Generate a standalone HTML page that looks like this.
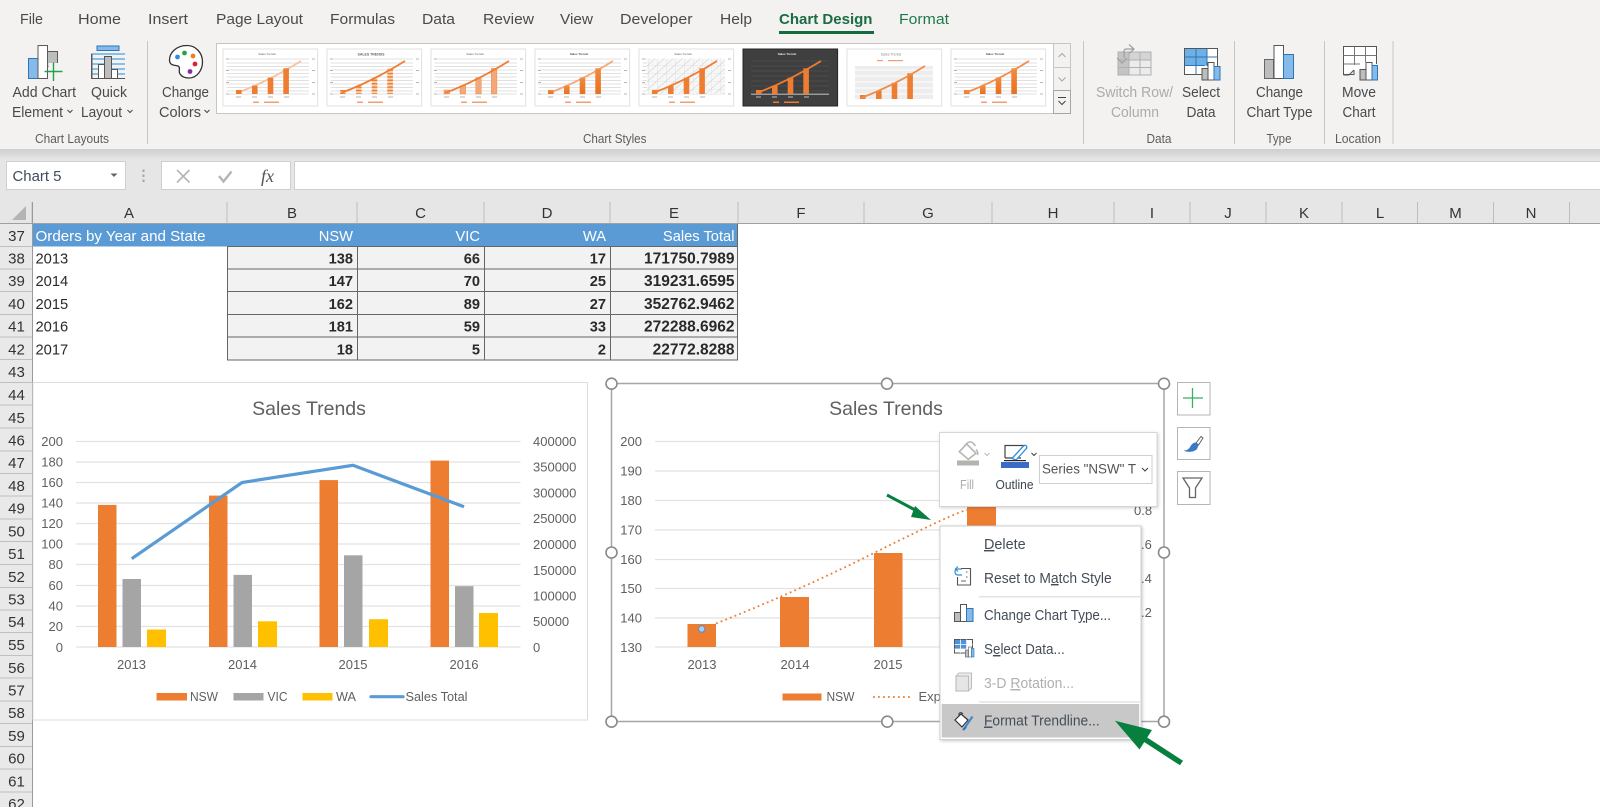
<!DOCTYPE html>
<html><head><meta charset="utf-8"><title>Chart Design</title>
<style>
html,body{margin:0;padding:0;background:#fff;width:1600px;height:807px;overflow:hidden}
svg{display:block;filter:blur(.3px)}
text{font-family:"Liberation Sans",sans-serif}
.rb{font-size:14.5px;fill:#4a4a4a}
.gl{font-size:13px;fill:#5c5c5c}
.dis{fill:#ababab}
.tab{font-size:15px;fill:#4a4a4a}
.col{font-size:15px;fill:#333;text-anchor:middle}
.row{font-size:15px;fill:#333;text-anchor:middle}
.yr{font-size:14.7px;fill:#2a2a2a}
.hd{font-size:14.7px;fill:#fff}
.num{font-size:14.6px;font-weight:bold;fill:#2a2a2a;text-anchor:end}
.ax{font-size:13px;fill:#606060}
.end{text-anchor:end}
.mid{text-anchor:middle}
.ttl{font-size:19.5px;fill:#606060;text-anchor:middle}
.mn{font-size:14.3px;fill:#444d57}
.tt{font-size:3px;fill:#666;text-anchor:middle}
</style></head><body>
<svg width="1600" height="807" viewBox="0 0 1600 807" xmlns="http://www.w3.org/2000/svg">
<defs>
<linearGradient id="sh" x1="0" y1="0" x2="0" y2="1"><stop offset="0" stop-color="#cfcfcf"/><stop offset="1" stop-color="#e6e6e6"/></linearGradient>
<linearGradient id="bo" x1="0" y1="0" x2="0" y2="1"><stop offset="0" stop-color="#f28a3c"/><stop offset="1" stop-color="#e8701f"/></linearGradient>
<pattern id="hat" width="9" height="8" patternUnits="userSpaceOnUse"><rect width="9" height="8" fill="#f7f7f7"/><path d="M0 8L9 0M0 0V8M0 0H9" stroke="#d2d2d2" stroke-width=".6"/></pattern>
<pattern id="str" width="3" height="3.4" patternUnits="userSpaceOnUse"><rect width="3" height="3.4" fill="#fbd3b5"/><rect width="3" height="1.5" fill="#ee7d31"/></pattern>
<g id="grid" stroke="#e0e0e0" stroke-width="1"><path d="M3.5 10H86M3.5 14H86M3.5 17.500H86M3.5 21H86M3.500 24.500H86M3.500 28H86M3.500 31.500H86M3.500 35H86M3.500 38.500H86M3.500 42H86M3.500 45H86"/></g>
<g id="lab" fill="#b5b5b5"><rect x="3" y="9.500" width="3" height="1"/><rect x="3" y="21" width="3" height="1"/><rect x="3" y="33" width="3" height="1"/><rect x="3" y="44.500" width="3" height="1"/><rect x="89" y="9.500" width="3" height="1"/><rect x="89" y="21" width="3" height="1"/><rect x="89" y="33" width="3" height="1"/><rect x="89" y="44.500" width="3" height="1"/><rect x="13" y="47.500" width="5" height="1"/><rect x="29" y="47.500" width="5" height="1"/><rect x="45" y="47.500" width="5" height="1"/><rect x="61" y="47.500" width="5" height="1"/><rect x="30" y="52.500" width="6" height="1.500" fill="#f0a070"/><rect x="41" y="52.500" width="15" height="1.500" fill="#f0a070"/></g>
<g id="bars"><rect x="13" y="41" width="5.600" height="4"/><rect x="29" y="36.700" width="5.600" height="8.300"/><rect x="44.700" y="28.700" width="5.600" height="16.300"/><rect x="60.300" y="19.300" width="5.600" height="25.700"/></g>
<path id="trl" d="M14 44Q46 32 78 12" fill="none" stroke-width="1.800"/>
<g id="tb"><rect width="94.600" height="57" fill="#fff" stroke="#e2e2e2" stroke-width="1"/><use href="#grid"/><use href="#lab"/></g>
</defs>

<!-- ribbon -->
<rect width="1600" height="149" fill="#f3f2f1"/>
<rect y="149" width="1600" height="11" fill="url(#sh)"/>
<rect y="160" width="1600" height="64" fill="#e6e6e6"/>

<text class="tab" x="20" y="24" textLength="23" lengthAdjust="spacingAndGlyphs">File</text>
<text class="tab" x="78" y="24" textLength="43" lengthAdjust="spacingAndGlyphs">Home</text>
<text class="tab" x="148" y="24" textLength="40" lengthAdjust="spacingAndGlyphs">Insert</text>
<text class="tab" x="216" y="24" textLength="87" lengthAdjust="spacingAndGlyphs">Page Layout</text>
<text class="tab" x="330" y="24" textLength="65" lengthAdjust="spacingAndGlyphs">Formulas</text>
<text class="tab" x="422" y="24" textLength="33" lengthAdjust="spacingAndGlyphs">Data</text>
<text class="tab" x="483" y="24" textLength="51" lengthAdjust="spacingAndGlyphs">Review</text>
<text class="tab" x="560" y="24" textLength="33" lengthAdjust="spacingAndGlyphs">View</text>
<text class="tab" x="620" y="24" textLength="72.500" lengthAdjust="spacingAndGlyphs">Developer</text>
<text class="tab" x="720" y="24" textLength="32" lengthAdjust="spacingAndGlyphs">Help</text>
<text class="tab" x="779" y="24" textLength="93.500" lengthAdjust="spacingAndGlyphs" style="fill:#1a6e41;font-weight:bold">Chart Design</text>
<rect x="779" y="31" width="95" height="3" fill="#146c3c"/>
<text class="tab" x="899" y="24" textLength="50" lengthAdjust="spacingAndGlyphs" style="fill:#1f7a4a">Format</text>

<!-- add chart element -->
<rect x="28.500" y="58.500" width="9.500" height="20" fill="#85bbeb" stroke="#2f75b5"/>
<rect x="47" y="51.500" width="10.500" height="15" fill="#bdbdbd" stroke="#5a5a5a"/>
<rect x="38" y="45.500" width="9.500" height="33" fill="#fff" stroke="#5a5a5a"/>
<rect x="48.500" y="63" width="13" height="17" fill="#f3f2f1"/>
<path d="M53.500 62.500V81M44.500 71.500H62.500" stroke="#22a04a" stroke-width="1.400" fill="none"/>
<text class="rb" x="12.500" y="97" textLength="63.500" lengthAdjust="spacingAndGlyphs">Add Chart</text>
<text class="rb" x="12" y="117" textLength="51" lengthAdjust="spacingAndGlyphs">Element</text>
<path d="M67.500 110l2.500 2.500 2.500-2.500" fill="none" stroke="#444"/>

<!-- quick layout -->
<rect x="97" y="46" width="22" height="4.500" fill="#85bbeb" stroke="#2f75b5"/>
<path d="M91 54H125M91 59H125M91 64H125M91 69H125M91 74H125" stroke="#4aa3df" stroke-width="1.200"/>
<rect x="91" y="54" width="1.500" height="25" fill="#595959"/>
<rect x="98.500" y="64.500" width="6" height="14" fill="#fff" stroke="#555"/>
<rect x="104.500" y="56.500" width="7" height="22" fill="#bdbdbd" stroke="#555"/>
<rect x="111.500" y="69.500" width="6" height="9" fill="#fff" stroke="#555"/>
<path d="M91 78.500H125" stroke="#555"/>
<text class="rb" x="91" y="97" textLength="36" lengthAdjust="spacingAndGlyphs">Quick</text>
<text class="rb" x="81" y="117" textLength="41" lengthAdjust="spacingAndGlyphs">Layout</text>
<path d="M127.500 110l2.500 2.500 2.500-2.500" fill="none" stroke="#444"/>
<text class="gl" x="35" y="143" textLength="74" lengthAdjust="spacingAndGlyphs">Chart Layouts</text>
<path d="M147.500 41V144M1083.500 41V144M1234.500 41V144M1324.500 41V144M1393 41V144" stroke="#c8c6c4"/>

<!-- palette -->
<path d="M187 45.500C176 45.500 169.500 53 169.500 60C169.500 66 175 65 178 66C181 67 178 71 180 74C182 77 186 78 189 78C197 78 202.500 70 202.500 62C202.500 53 196 45.500 187 45.500Z" fill="#fff" stroke="#333" stroke-width="1.300"/>
<circle cx="177.500" cy="57" r="2.400" fill="#2e8fd6"/><circle cx="184.500" cy="53" r="2.400" fill="#2f9e44"/><circle cx="193" cy="56" r="2.400" fill="#e8811e"/><circle cx="195" cy="64" r="2.400" fill="#e81e2b"/><circle cx="190" cy="71.500" r="2.400" fill="#8a2aa8"/>
<text class="rb" x="162" y="97" textLength="47" lengthAdjust="spacingAndGlyphs">Change</text>
<text class="rb" x="159" y="117" textLength="42" lengthAdjust="spacingAndGlyphs">Colors</text>
<path d="M204.500 110l2.500 2.500 2.500-2.500" fill="none" stroke="#444"/>

<!-- gallery -->
<rect x="216.500" y="43.500" width="837" height="70" fill="#fff" stroke="#c8c6c4"/>
<g transform="translate(223,49)"><use href="#tb"/><text class="tt" x="44" y="6">Sales Trends</text><use href="#trl" stroke="#f7c19c"/><use href="#bars" fill="#ee7d31"/></g>
<g transform="translate(327,49)"><use href="#tb"/><text class="tt" x="44" y="6.500" style="font-weight:bold;font-size:3.500px">SALES TRENDS</text><use href="#bars" fill="url(#str)"/><use href="#trl" stroke="#ee7d31"/></g>
<g transform="translate(431,49)"><use href="#tb"/><text class="tt" x="44" y="6">Sales Trends</text><use href="#bars" fill="#f4a77a" stroke="#ee7d31" stroke-width=".4"/><use href="#trl" stroke="#ee7d31"/></g>
<g transform="translate(535,49)"><use href="#tb"/><text class="tt" x="44" y="6" style="font-weight:bold;fill:#44546a">Sales Trends</text><use href="#trl" stroke="#f4a77a"/><use href="#bars" fill="url(#bo)"/></g>
<g transform="translate(639,49)"><use href="#tb"/><rect x="8" y="9.500" width="78" height="35.500" fill="url(#hat)"/><text class="tt" x="44" y="6">Sales Trends</text><use href="#bars" fill="#ee7d31"/><use href="#trl" stroke="#ee7d31"/></g>
<g transform="translate(743,49)"><rect width="94.600" height="57" fill="#3f3f3f" stroke="#262626"/><path d="M8 12H86M8 17H86M8 22H86M8 27H86M8 32H86M8 37H86M8 42H86" stroke="#595959" stroke-width=".6"/><rect x="8" y="44.500" width="78" height="1.500" fill="#9a9a9a"/><text class="tt" x="44" y="6" style="fill:#eee;font-weight:bold">Sales Trends</text><use href="#bars" fill="#ee7d31"/><use href="#trl" stroke="#ee7d31"/><rect x="30" y="52.500" width="6" height="1.500" fill="#ee7d31"/><rect x="41" y="52.500" width="15" height="1.500" fill="#ee7d31"/><rect x="13" y="47.500" width="5" height="1" fill="#bbb"/><rect x="29" y="47.500" width="5" height="1" fill="#bbb"/><rect x="45" y="47.500" width="5" height="1" fill="#bbb"/><rect x="61" y="47.500" width="5" height="1" fill="#bbb"/></g>
<g transform="translate(847,49)"><rect width="94.600" height="57" fill="#fff" stroke="#e2e2e2" stroke-width="1"/><rect x="8" y="17" width="78" height="33" fill="#ededed"/><path d="M8 21H86M8 27H86M8 33H86M8 39H86M8 45H86" stroke="#fafafa" stroke-width="1.600"/><text class="tt" x="44" y="6.500" style="font-size:3.500px;fill:#888">Sales Trends</text><rect x="30" y="11" width="6" height="1.200" fill="#f0a070"/><rect x="41" y="11" width="15" height="1.200" fill="#f0a070"/><g transform="translate(0,5)"><use href="#bars" fill="#ee7d31"/><use href="#trl" stroke="#f08c48"/></g></g>
<g transform="translate(951,49)"><use href="#tb"/><text class="tt" x="44" y="6" style="font-weight:bold;fill:#44546a">Sales Trends</text><use href="#bars" fill="url(#bo)"/><use href="#trl" stroke="#f08c48"/></g>
<rect x="1053.500" y="43.500" width="17" height="24" fill="#f3f2f1" stroke="#c8c6c4"/>
<rect x="1053.500" y="67.500" width="17" height="23" fill="#f3f2f1" stroke="#c8c6c4"/>
<rect x="1053.500" y="90.500" width="17" height="23" fill="#f3f2f1" stroke="#a8a6a4"/>
<path d="M1058.500 57l3.500-3.500 3.500 3.500M1058.500 77.500l3.500 3.500 3.500-3.500" fill="none" stroke="#a6a6a6"/>
<path d="M1058 97.500H1066M1058.500 101l3.500 3.500 3.500-3.500" fill="none" stroke="#444"/>
<text class="gl" x="583" y="143" textLength="63.500" lengthAdjust="spacingAndGlyphs">Chart Styles</text>

<!-- switch -->
<g stroke="#b0b0b0" fill="none">
<rect x="1118" y="52" width="33" height="23" fill="#ececec"/>
<rect x="1118" y="52" width="11" height="23" fill="#c4c4c4"/>
<rect x="1118" y="52" width="33" height="8" fill="#c4c4c4" fill-opacity=".6"/>
<path d="M1129 52V75M1140 52V75M1118 60H1151M1118 67.500H1151"/>
<path d="M1124 58V51Q1124 49 1127 49H1133M1129 44.500l5 4.500-5 4.500M1117 58l5 5 5-5" stroke="#a0a0a0" stroke-width="1.200"/>
</g>
<text class="rb dis" x="1096" y="97" textLength="77" lengthAdjust="spacingAndGlyphs">Switch Row/</text>
<text class="rb dis" x="1111" y="117" textLength="48" lengthAdjust="spacingAndGlyphs">Column</text>

<!-- select data -->
<rect x="1184.500" y="48.500" width="33" height="26" fill="#fff" stroke="#555"/>
<rect x="1185" y="49" width="22" height="16.500" fill="#6cb0e6"/>
<path d="M1196 48.500V74.500M1207 48.500V66M1184.500 57H1217.500M1184.500 65.500H1205" stroke="#2f75b5" fill="none"/>
<rect x="1202" y="68.500" width="6" height="11.500" fill="#bdbdbd" stroke="#555"/>
<rect x="1208" y="62.500" width="6" height="17.500" fill="#fff" stroke="#555"/>
<rect x="1214" y="66.500" width="6" height="13.500" fill="#85bbeb" stroke="#2f75b5"/>
<text class="rb" x="1182" y="97" textLength="38" lengthAdjust="spacingAndGlyphs">Select</text>
<text class="rb" x="1186.500" y="117" textLength="29" lengthAdjust="spacingAndGlyphs">Data</text>
<text class="gl" x="1146.500" y="143" textLength="25" lengthAdjust="spacingAndGlyphs">Data</text>

<!-- change chart type -->
<rect x="1264.500" y="59.500" width="9" height="19" fill="#bdbdbd" stroke="#666"/>
<rect x="1274" y="45.500" width="9.500" height="33" fill="#fff" stroke="#555"/>
<rect x="1283.500" y="54.500" width="10" height="24" fill="#85bbeb" stroke="#2f75b5"/>
<text class="rb" x="1256" y="97" textLength="47" lengthAdjust="spacingAndGlyphs">Change</text>
<text class="rb" x="1246.500" y="117" textLength="66" lengthAdjust="spacingAndGlyphs">Chart Type</text>
<text class="gl" x="1266.500" y="143" textLength="25" lengthAdjust="spacingAndGlyphs">Type</text>

<!-- move chart -->
<path d="M1343.500 75V46.500H1376.500V64M1343.500 75H1349L1354 70" fill="#fff" stroke="#555"/>
<path d="M1354.500 46.500V65M1365.500 46.500V62M1343.500 55.500H1376.500M1343.500 64H1360" stroke="#777" fill="none"/>
<path d="M1344 74.500H1354V70" fill="none" stroke="#555"/>
<rect x="1360" y="69.500" width="6" height="10.500" fill="#bdbdbd" stroke="#555"/>
<rect x="1366" y="62.500" width="6" height="17.500" fill="#fff" stroke="#555"/>
<rect x="1372" y="65.500" width="5.500" height="14.500" fill="#85bbeb" stroke="#2f75b5"/>
<text class="rb" x="1342" y="97" textLength="34" lengthAdjust="spacingAndGlyphs">Move</text>
<text class="rb" x="1342.500" y="117" textLength="33" lengthAdjust="spacingAndGlyphs">Chart</text>
<text class="gl" x="1335" y="143" textLength="46" lengthAdjust="spacingAndGlyphs">Location</text>

<!-- formula bar -->
<rect x="6.500" y="161.500" width="119" height="28" fill="#fff" stroke="#cfcfcf"/>
<text x="12.500" y="181" style="font-size:15px;fill:#3f4d5c" textLength="49" lengthAdjust="spacingAndGlyphs">Chart 5</text>
<path d="M110.500 173.500h7l-3.500 3.500z" fill="#666"/>
<path d="M143.500 169.500v2.500M143.500 174.500v2.500M143.500 179.500v2.500" stroke="#a6a6a6" stroke-width="2"/>
<rect x="161.500" y="161.500" width="129" height="28" fill="#fff" stroke="#cfcfcf"/>
<path d="M177 170l12.500 12.500M189.500 170L177 182.500" stroke="#b5b5b5" stroke-width="1.600" fill="none"/>
<path d="M219 176l4.500 5.500 8-10" stroke="#b5b5b5" stroke-width="2.400" fill="none"/>
<text x="261" y="182" style="font-family:'Liberation Serif',serif;font-style:italic;font-size:18px;fill:#555">fx</text>
<rect x="294.500" y="161.500" width="1306" height="28" fill="#fff" stroke="#cfcfcf"/>

<!-- sheet -->
<rect x="0" y="224" width="1600" height="583" fill="#fff"/>
<rect y="224" width="32" height="583" fill="#e9e9e9"/>
<path d="M26 206V220H12Z" fill="#b4b4b4"/>
<path d="M32 202V223M227 202V223M357 202V223M484 202V223M610 202V223M738 202V223M864 202V223M992 202V223M1114 202V223M1190 202V223M1266 202V223M1342 202V223M1417.500 202V223M1493.500 202V223M1569.500 202V223" stroke="#bdbdbd" fill="none"/>
<path d="M0 223.500H1600" stroke="#a0a0a0"/>
<path d="M32.500 202V807" stroke="#9a9a9a"/>
<g class="collbl">
<text class="col" x="129" y="218">A</text><text class="col" x="292" y="218">B</text><text class="col" x="420.500" y="218">C</text><text class="col" x="547" y="218">D</text><text class="col" x="674" y="218">E</text><text class="col" x="801" y="218">F</text><text class="col" x="928" y="218">G</text><text class="col" x="1053" y="218">H</text><text class="col" x="1152" y="218">I</text><text class="col" x="1228" y="218">J</text><text class="col" x="1304" y="218">K</text><text class="col" x="1380" y="218">L</text><text class="col" x="1455.500" y="218">M</text><text class="col" x="1531" y="218">N</text>
</g>
<path d="M0 246.500H32M0 269H32M0 291.500H32M0 314.500H32M0 337H32M0 359.500H32M0 382.500H32M0 405H32M0 428H32M0 451H32M0 473.500H32M0 496H32M0 519H32M0 541.500H32M0 564.500H32M0 587.500H32M0 610H32M0 632.500H32M0 655.500H32M0 678H32M0 701H32M0 723.500H32M0 746.500H32M0 769H32M0 792H32" stroke="#bfbfbf" fill="none"/>
<text class="row" x="16.500" y="241">37</text><text class="row" x="16.500" y="263.500">38</text><text class="row" x="16.500" y="286">39</text><text class="row" x="16.500" y="309">40</text><text class="row" x="16.500" y="331.500">41</text><text class="row" x="16.500" y="354.500">42</text><text class="row" x="16.500" y="377">43</text><text class="row" x="16.500" y="400">44</text><text class="row" x="16.500" y="423">45</text><text class="row" x="16.500" y="445.500">46</text><text class="row" x="16.500" y="468">47</text><text class="row" x="16.500" y="491">48</text><text class="row" x="16.500" y="513.500">49</text><text class="row" x="16.500" y="536.500">50</text><text class="row" x="16.500" y="559">51</text><text class="row" x="16.500" y="582">52</text><text class="row" x="16.500" y="604.500">53</text><text class="row" x="16.500" y="627">54</text><text class="row" x="16.500" y="650">55</text><text class="row" x="16.500" y="673">56</text><text class="row" x="16.500" y="695.500">57</text><text class="row" x="16.500" y="718">58</text><text class="row" x="16.500" y="741">59</text><text class="row" x="16.500" y="763.500">60</text><text class="row" x="16.500" y="786.500">61</text><text class="row" x="16.500" y="809">62</text>

<!-- table -->
<rect x="33" y="224" width="705" height="22.500" fill="#5b9bd5"/>
<rect x="227" y="246.500" width="511" height="113.500" fill="#f2f2f2"/>
<path d="M227 246.500H738M227 269H738M227 291.500H738M227 314.500H738M227 337H738M227 360H738M227.500 246V360M357.500 246V360M484.500 246V360M610.500 246V360M737.500 224V360" stroke="#666" fill="none"/>
<text class="hd" x="35.500" y="241" textLength="170" lengthAdjust="spacingAndGlyphs">Orders by Year and State</text>
<text class="hd end" x="353" y="241">NSW</text><text class="hd end" x="480" y="241">VIC</text><text class="hd end" x="606" y="241">WA</text><text class="hd end" x="734.500" y="241">Sales Total</text>
<text class="yr" x="35.500" y="263.500">2013</text><text class="yr" x="35.500" y="286">2014</text><text class="yr" x="35.500" y="309">2015</text><text class="yr" x="35.500" y="331.500">2016</text><text class="yr" x="35.500" y="354.500">2017</text>
<text class="num" x="353" y="263.500">138</text><text class="num" x="480" y="263.500">66</text><text class="num" x="606" y="263.500">17</text><text class="num" x="734.500" y="263.500" style="font-size:15.500px">171750.7989</text>
<text class="num" x="353" y="286">147</text><text class="num" x="480" y="286">70</text><text class="num" x="606" y="286">25</text><text class="num" x="734.500" y="286" style="font-size:15.500px">319231.6595</text>
<text class="num" x="353" y="309">162</text><text class="num" x="480" y="309">89</text><text class="num" x="606" y="309">27</text><text class="num" x="734.500" y="309" style="font-size:15.500px">352762.9462</text>
<text class="num" x="353" y="331.500">181</text><text class="num" x="480" y="331.500">59</text><text class="num" x="606" y="331.500">33</text><text class="num" x="734.500" y="331.500" style="font-size:15.500px">272288.6962</text>
<text class="num" x="353" y="354.500">18</text><text class="num" x="480" y="354.500">5</text><text class="num" x="606" y="354.500">2</text><text class="num" x="734.500" y="354.500" style="font-size:15.500px">22772.8288</text>

<!-- chart 1 -->
<rect x="33" y="382.500" width="554.500" height="337.500" fill="#fff" stroke="#dcdcdc"/>
<text class="ttl" x="309" y="415">Sales Trends</text>
<path d="M76 441.500H520.500M76 462H520.500M76 482.500H520.500M76 503H520.500M76 523.500H520.500M76 544H520.500M76 564.500H520.500M76 585.500H520.500M76 606H520.500M76 626.500H520.500M76 647H520.500" stroke="#e2e2e2" stroke-width="1.300" fill="none"/>
<g fill="#ed7d31"><rect x="98" y="504.900" width="18.500" height="142.100"/><rect x="209" y="495.600" width="18.500" height="151.400"/><rect x="319.500" y="480.100" width="18.500" height="166.900"/><rect x="430.500" y="460.600" width="18.500" height="186.400"/></g>
<g fill="#a5a5a5"><rect x="122.500" y="579" width="18.500" height="68"/><rect x="233.500" y="574.900" width="18.500" height="72.100"/><rect x="344" y="555.300" width="18.500" height="91.700"/><rect x="455" y="586.200" width="18.500" height="60.800"/></g>
<g fill="#ffc000"><rect x="147" y="629.500" width="19" height="17.500"/><rect x="258" y="621.300" width="19" height="25.700"/><rect x="369" y="619.200" width="19" height="27.800"/><rect x="479" y="613" width="19" height="34"/></g>
<polyline points="131.700,558.700 242,482.500 353,465.300 464,506.800" fill="none" stroke="#5b9bd5" stroke-width="3.200"/>
<g class="ax end"><text x="63" y="446">200</text><text x="63" y="466.500">180</text><text x="63" y="487">160</text><text x="63" y="507.500">140</text><text x="63" y="528">120</text><text x="63" y="548.500">100</text><text x="63" y="569">80</text><text x="63" y="590">60</text><text x="63" y="610.500">40</text><text x="63" y="631">20</text><text x="63" y="652">0</text></g>
<g class="ax"><text x="533" y="446">400000</text><text x="533" y="471.500">350000</text><text x="533" y="497.500">300000</text><text x="533" y="523">250000</text><text x="533" y="549">200000</text><text x="533" y="575">150000</text><text x="533" y="600.500">100000</text><text x="533" y="626">50000</text><text x="533" y="652">0</text></g>
<g class="ax mid"><text x="131.500" y="669">2013</text><text x="242.500" y="669">2014</text><text x="353" y="669">2015</text><text x="464" y="669">2016</text></g>
<rect x="156.500" y="693" width="30.500" height="7.500" fill="#ed7d31"/><text class="ax" x="190" y="701" textLength="28" lengthAdjust="spacingAndGlyphs">NSW</text>
<rect x="233.500" y="693" width="30" height="7.500" fill="#a5a5a5"/><text class="ax" x="267.500" y="701" textLength="20" lengthAdjust="spacingAndGlyphs">VIC</text>
<rect x="302.500" y="693" width="30" height="7.500" fill="#ffc000"/><text class="ax" x="336" y="701" textLength="20" lengthAdjust="spacingAndGlyphs">WA</text>
<path d="M371 696.700H403" stroke="#5b9bd5" stroke-width="3.200" stroke-linecap="round"/><text class="ax" x="405.500" y="701" textLength="62" lengthAdjust="spacingAndGlyphs">Sales Total</text>

<!-- chart 2 -->
<rect x="611.500" y="383.500" width="552.500" height="338" fill="#fff" stroke="#a6a6a6" stroke-width="1.500"/>
<text class="ttl" x="886" y="415">Sales Trends</text>
<path d="M655 441.500H1122M655 471H1122M655 500.500H1122M655 530H1122M655 559.500H1122M655 588.500H1122M655 618H1122M655 647H1122" stroke="#e2e2e2" stroke-width="1.300" fill="none"/>
<g fill="#ed7d31"><rect x="687.500" y="624" width="28.500" height="23"/><rect x="780" y="597" width="29" height="50"/><rect x="874" y="553" width="28.500" height="94"/><rect x="967" y="497" width="29" height="150"/></g>
<path d="M702 629Q790 595 873 553.500T967 510" fill="none" stroke="#ed7d31" stroke-width="1.800" stroke-dasharray="1.800 3.200"/>
<circle cx="701.700" cy="629" r="3.200" fill="#a9d0f0" stroke="#4a90d9" stroke-width="1"/>
<g class="ax end"><text x="642" y="446">200</text><text x="642" y="475.500">190</text><text x="642" y="505">180</text><text x="642" y="534.500">170</text><text x="642" y="564">160</text><text x="642" y="593">150</text><text x="642" y="622.500">140</text><text x="642" y="652">130</text></g>
<g class="ax mid"><text x="702" y="669">2013</text><text x="795" y="669">2014</text><text x="888" y="669">2015</text></g>
<rect x="782.500" y="693.500" width="39" height="7" fill="#ed7d31"/><text class="ax" x="826.500" y="701" textLength="28" lengthAdjust="spacingAndGlyphs">NSW</text>
<path d="M873 697H912.500" stroke="#ed7d31" stroke-width="1.800" stroke-dasharray="1.800 3.200"/><text class="ax" x="918.500" y="701">Exp</text>
<g class="ax"><text x="1134" y="515">0.8</text><text x="1141" y="549">.6</text><text x="1141" y="583">.4</text><text x="1141" y="617">.2</text></g>
<g fill="#fff" stroke="#8a8a8a" stroke-width="1.600"><circle cx="611.500" cy="383.700" r="5.500"/><circle cx="887" cy="383.700" r="5.500"/><circle cx="1164" cy="383.700" r="5.500"/><circle cx="611.500" cy="552.500" r="5.500"/><circle cx="1164" cy="552.500" r="5.500"/><circle cx="611.500" cy="721.700" r="5.500"/><circle cx="887.300" cy="721.700" r="5.500"/><circle cx="1164" cy="721.700" r="5.500"/></g>

<!-- side buttons -->
<g fill="#fff" stroke="#b5b5b5"><rect x="1177.500" y="382.500" width="32.500" height="32.500"/><rect x="1177.500" y="427.500" width="32.500" height="32"/><rect x="1177.500" y="471.500" width="32.500" height="33"/></g>
<path d="M1192.500 388V408M1183 398H1203" stroke="#3fae5f" stroke-width="1.300" fill="none"/>
<path d="M1196 443L1201 436.500L1203 438L1198.500 445Z" fill="#fff" stroke="#666"/>
<path d="M1196.500 442.500C1192.500 442 1190.500 446 1189.500 448C1187.500 450 1186 450.500 1183.500 450.500C1187 452.500 1194 452.500 1197 449C1198 447 1198.500 445 1198.500 444.500Z" fill="#3a78c8"/>
<path d="M1183 478H1202L1195.500 488V497.500H1189.500V488Z" fill="#fff" stroke="#666" stroke-width="1.300"/>

<!-- small arrow -->
<path d="M887 495L917 511" stroke="#067f3f" stroke-width="3"/>
<path d="M931 520L915 506L911 517Z" fill="#067f3f"/>

<!-- mini toolbar -->
<rect x="939.500" y="432.500" width="217.500" height="74" fill="#fff" stroke="#d6d6d6" style="filter:drop-shadow(1px 1px 1.500px rgba(0,0,0,.18))"/>
<path d="M959.300 451.700L966.700 444L976 453.300L968.300 459.300Z" fill="#fff" stroke="#b5b5b5" stroke-width="1.600"/>
<path d="M965 445L968 442.500Q971 441 973 443L975.500 446M976 449.500Q978.500 452 977.500 455" fill="none" stroke="#b5b5b5" stroke-width="1.500"/>
<rect x="957" y="460.500" width="22" height="5" fill="#b5b3ae"/>
<path d="M984.500 453l2.500 2.500 2.500-2.500" fill="none" stroke="#bbb"/>
<text x="960" y="489" style="font-size:13px;fill:#ababab" textLength="14" lengthAdjust="spacingAndGlyphs">Fill</text>
<path d="M1005 458V445.500H1024V448M1021 458H1005" fill="none" stroke="#444" stroke-width="1.200"/>
<path d="M1012 458.500L1023 446.500Q1025 444.500 1026.500 446L1026.800 448L1016 460L1012 458.500Z" fill="#fff" stroke="#2e8fd6" stroke-width="1.300"/>
<rect x="1004" y="460" width="22" height="1.200" fill="#222"/>
<rect x="1001" y="462" width="28" height="6" fill="#3a6cc6"/>
<path d="M1031.500 453l2.500 2.500 2.500-2.500" fill="none" stroke="#444" stroke-width="1.100"/>
<text x="995.500" y="489" style="font-size:13px;fill:#3d4650" textLength="38" lengthAdjust="spacingAndGlyphs">Outline</text>
<rect x="1039.500" y="455.500" width="112.500" height="28" fill="#fff" stroke="#cfcfcf"/>
<text x="1042" y="473.500" style="font-size:14px;fill:#555" textLength="94" lengthAdjust="spacingAndGlyphs">Series "NSW" T</text>
<path d="M1142 468l3 3 3-3" fill="none" stroke="#444" stroke-width="1.100"/>

<!-- context menu -->
<rect x="940" y="526" width="201" height="213.500" fill="#fff" stroke="#d0d0d0" style="filter:drop-shadow(1px 1px 1.500px rgba(0,0,0,.22))"/>
<rect x="941.700" y="704" width="197.500" height="33.500" fill="#c8c8c8"/>
<path d="M979 596.700H1140M979 702H1140" stroke="#e3e3e3" stroke-width="1.500"/>
<text class="mn" x="984" y="549" textLength="41.700" lengthAdjust="spacingAndGlyphs"><tspan text-decoration="underline">D</tspan>elete</text>
<text class="mn" x="984" y="583" textLength="127.700" lengthAdjust="spacingAndGlyphs">Reset to M<tspan text-decoration="underline">a</tspan>tch Style</text>
<text class="mn" x="984" y="620" textLength="127" lengthAdjust="spacingAndGlyphs">Change Chart T<tspan text-decoration="underline">y</tspan>pe...</text>
<text class="mn" x="984" y="654" textLength="80.700" lengthAdjust="spacingAndGlyphs">S<tspan text-decoration="underline">e</tspan>lect Data...</text>
<text class="mn" x="984" y="688" textLength="90" lengthAdjust="spacingAndGlyphs" style="fill:#b0b0b0">3-D <tspan text-decoration="underline">R</tspan>otation...</text>
<text class="mn" x="984" y="725.500" textLength="115.700" lengthAdjust="spacingAndGlyphs"><tspan text-decoration="underline">F</tspan>ormat Trendline...</text>

<!-- menu icons -->
<path d="M961 568.500H970.500V585H957.500V577" fill="#fff" stroke="#555" stroke-width="1.100"/>
<path d="M962 575H958Q955 575 955 571.500Q955 569 958 569H962M958 566.500L955.500 569L958 571.500" fill="none" stroke="#2e8fd6" stroke-width="1.200"/>
<path d="M966 572h1.500M966 577h1.500M961 581h5" stroke="#666"/>
<rect x="954.500" y="612.500" width="6" height="9" fill="#bdbdbd" stroke="#555"/>
<rect x="960.500" y="604.500" width="6" height="17" fill="#fff" stroke="#555"/>
<rect x="966.500" y="608.500" width="6.500" height="13" fill="#85bbeb" stroke="#2f75b5"/>
<rect x="954.500" y="639.500" width="18" height="13.500" fill="#fff" stroke="#555"/>
<rect x="955" y="640" width="12" height="9" fill="#4f94d8"/>
<path d="M960.500 639.500V653M966.500 639.500V650M954.500 644.500H972.500M954.500 649H966" stroke="#fff" fill="none" stroke-width=".8"/>
<rect x="965.500" y="650" width="3" height="7" fill="#bdbdbd" stroke="#555" stroke-width=".6"/><rect x="968.500" y="647" width="3" height="10" fill="#fff" stroke="#555" stroke-width=".6"/><rect x="971.500" y="648.500" width="2.500" height="8.500" fill="#85bbeb" stroke="#2f75b5" stroke-width=".6"/>
<path d="M956 676L959 673H971.500V688L968.500 691H956Z" fill="#ededed" stroke="#bdbdbd" stroke-width="1.100"/>
<rect x="956" y="676" width="12.500" height="15" fill="#e6e6e6" stroke="#bdbdbd" stroke-width="1.100"/>
<path d="M955 720L961 714L968 720L962 727Z" fill="#fff" stroke="#333" stroke-width="1.200"/>
<path d="M959 716V713.500Q961 711.500 963 714" fill="none" stroke="#333"/>
<path d="M965 727.500L972.500 716.500" stroke="#3f86cc" stroke-width="2"/>
<path d="M963 730L966 727" stroke="#2f75b5" stroke-width="2.200"/>

<!-- big arrow -->
<path d="M1115 720.700L1152 730L1139.500 749.500Z" fill="#067f3f"/>
<path d="M1143 738L1181.500 763" stroke="#067f3f" stroke-width="5.500"/>
</svg>
</body></html>
